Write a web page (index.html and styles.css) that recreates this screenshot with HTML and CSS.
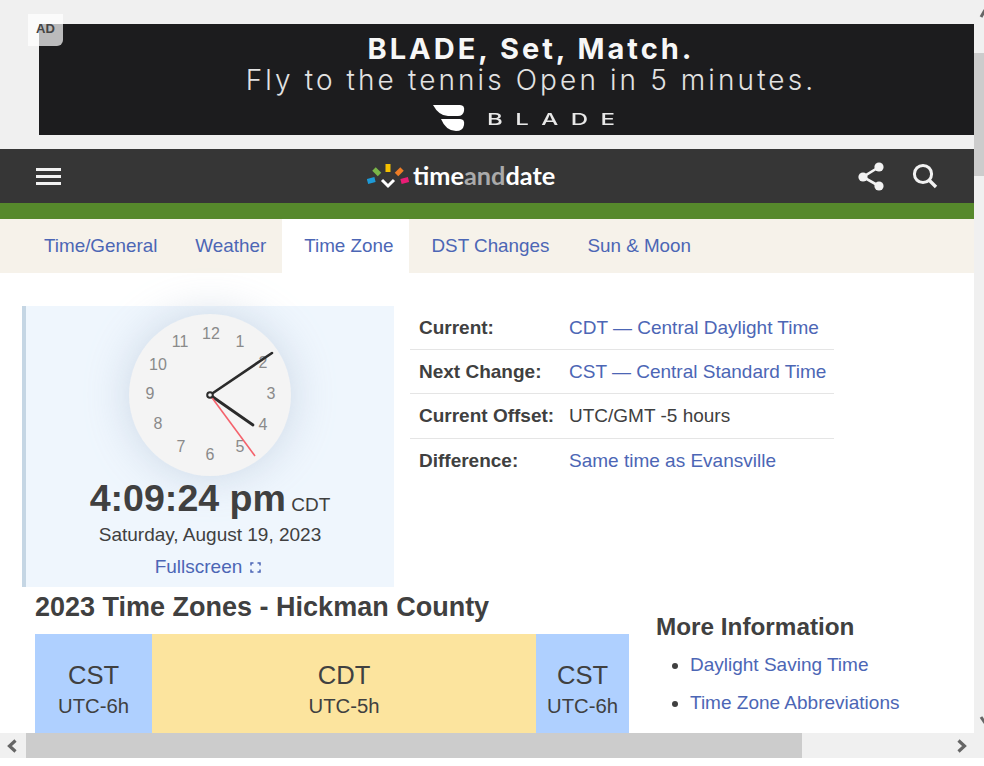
FILE: index.html
```html
<!DOCTYPE html>
<html>
<head>
    <meta charset="UTF-8">
    <meta name="viewport" content="width=device-width, initial-scale=1.0">
    <title>Hickman County Time Zone</title>
    <link rel="stylesheet" href="styles.css">
</head>
<body>
    <div class="window">
        <div class="page">
            <!-- ad -->
            <div class="ad-area">
                <span class="ad-badge">AD</span>
                <div class="ad-banner">
                    <p class="ad-title">BLADE, Set, Match.</p>
                    <p class="ad-sub">Fly to the tennis Open in 5 minutes.</p>
                    <div class="ad-brand">
                        <svg class="ad-logo" width="32" height="27" viewBox="0 0 32 27">
                            <path d="M0 0H27Q32 0 31 6Q30 11 25 11H15Q6 11 0 0Z" fill="#fff"/>
                            <path d="M8 14H27Q32 14 31 20Q30 26 23 26Q13 26 8 14Z" fill="#fff"/>
                        </svg>
                        <span class="ad-brand-name">BLADE</span>
                    </div>
                </div>
            </div>

            <!-- header -->
            <header>
                <div class="burger"><i></i><i></i><i></i></div>
                <div class="logo">
                    <svg width="43" height="27" viewBox="0 0 43 27">
                        <line x1="0.5" y1="18.5" x2="8" y2="16.5" stroke="#1e9ad6" stroke-width="5"/>
                        <line x1="7" y1="6" x2="12.5" y2="11.5" stroke="#7ab648" stroke-width="5"/>
                        <line x1="21" y1="1" x2="21" y2="9" stroke="#f5c000" stroke-width="5"/>
                        <line x1="35" y1="6" x2="29.5" y2="11.5" stroke="#ee7d26" stroke-width="5"/>
                        <line x1="41.5" y1="16.5" x2="34" y2="18.5" stroke="#ea1d76" stroke-width="5"/>
                        <path d="M15 17L21 23L27 17" fill="none" stroke="#fff" stroke-width="3"/>
                    </svg>
                    <span class="logo-text">time<span class="logo-and">and</span>date</span>
                </div>
                <div class="header-icons">
                    <svg width="28" height="30" viewBox="0 0 28 30">
                        <path d="M21 6L5 16L21 25" fill="none" stroke="#f2f2f2" stroke-width="2.6"/>
                        <circle cx="21" cy="6" r="4.6" fill="#f2f2f2"/>
                        <circle cx="5" cy="16" r="4.6" fill="#f2f2f2"/>
                        <circle cx="21" cy="25" r="4.6" fill="#f2f2f2"/>
                    </svg>
                    <svg width="26" height="26" viewBox="0 0 26 26">
                        <circle cx="11" cy="11" r="8.6" fill="none" stroke="#f2f2f2" stroke-width="3"/>
                        <line x1="17" y1="17" x2="24" y2="24" stroke="#f2f2f2" stroke-width="3.4"/>
                    </svg>
                </div>
            </header>
            <div class="green-bar"></div>

            <nav>
                <a href="#">Time/General</a>
                <a href="#">Weather</a>
                <a href="#" class="active">Time Zone</a>
                <a href="#">DST Changes</a>
                <a href="#">Sun &amp; Moon</a>
            </nav>

            <main>
                <div class="top-row">
                    <div class="clock-card">
                        <svg class="clock" width="240" height="190" viewBox="0 0 240 190">
                            <circle class="clock-face" cx="120" cy="90" r="81"/>
                            <g class="clock-nums">
                                <text x="121" y="34">12</text>
                                <text x="150" y="42">1</text>
                                <text x="173" y="63">2</text>
                                <text x="181" y="94">3</text>
                                <text x="173" y="125">4</text>
                                <text x="150" y="147">5</text>
                                <text x="120" y="155">6</text>
                                <text x="91" y="147">7</text>
                                <text x="68" y="124">8</text>
                                <text x="60" y="94">9</text>
                                <text x="68" y="65">10</text>
                                <text x="90" y="42">11</text>
                            </g>
                            <line x1="120" y1="90" x2="182" y2="48" stroke="#2b2b2b" stroke-width="2.6" stroke-linecap="round"/>
                            <line x1="120" y1="90" x2="163" y2="120" stroke="#2b2b2b" stroke-width="2.8" stroke-linecap="round"/>
                            <line x1="120" y1="90" x2="165" y2="151" stroke="#f4626c" stroke-width="1.6"/>
                            <circle cx="120" cy="90" r="2.8" fill="#f4f4f4" stroke="#2b2b2b" stroke-width="2"/>
                        </svg>
                        <div class="time"><b>4:09:24 pm</b> <span>CDT</span></div>
                        <div class="date">Saturday, August 19, 2023</div>
                        <div class="fullscreen">
                            <a href="#">Fullscreen</a>
                            <svg width="11" height="11" viewBox="0 0 11 11">
                                <path d="M1 3.5V1H3.5M7.5 1H10V3.5M10 7.5V10H7.5M3.5 10H1V7.5" fill="none" stroke="#4c66b5" stroke-width="1.5"/>
                            </svg>
                        </div>
                    </div>

                    <table class="info">
                        <tr><th>Current:</th><td><a href="#">CDT — Central Daylight Time</a></td></tr>
                        <tr><th>Next Change:</th><td><a href="#">CST — Central Standard Time</a></td></tr>
                        <tr><th>Current Offset:</th><td>UTC/GMT -5 hours</td></tr>
                        <tr><th>Difference:</th><td><a href="#">Same time as Evansville</a></td></tr>
                    </table>
                </div>

                <div class="bottom-row">
                    <section class="zones">
                        <h2>2023 Time Zones - Hickman County</h2>
                        <div class="zone-bar">
                            <div class="zone cst zone-first"><strong>CST</strong><span>UTC-6h</span></div>
                            <div class="zone cdt"><strong>CDT</strong><span>UTC-5h</span></div>
                            <div class="zone cst zone-last"><strong>CST</strong><span>UTC-6h</span></div>
                        </div>
                    </section>
                    <aside class="more">
                        <h3>More Information</h3>
                        <ul>
                            <li><a href="#">Daylight Saving Time</a></li>
                            <li><a href="#">Time Zone Abbreviations</a></li>
                        </ul>
                    </aside>
                </div>
            </main>
        </div>

        <!-- scrollbars -->
        <div class="vscroll">
            <svg class="v-up" width="10" height="10" viewBox="0 0 10 10"><path d="M7 8L11 1" fill="none" stroke="#666" stroke-width="3"/></svg>
            <div class="v-thumb"></div>
            <svg class="v-down" width="10" height="10" viewBox="0 0 10 10"><path d="M7 2L11 8" fill="none" stroke="#666" stroke-width="3"/></svg>
        </div>
        <div class="hscroll">
            <div class="h-arrow">
                <svg width="12" height="14" viewBox="0 0 12 14"><path d="M9.5 1.5L3.5 7L9.5 12.5" fill="none" stroke="#666" stroke-width="3.2"/></svg>
            </div>
            <div class="h-thumb"></div>
            <div class="h-arrow h-arrow-right">
                <svg width="12" height="14" viewBox="0 0 12 14"><path d="M2.5 1.5L8.5 7L2.5 12.5" fill="none" stroke="#666" stroke-width="3.2"/></svg>
            </div>
        </div>
    </div>
</body>
</html>
```

FILE: styles.css
```css
/* Global Styles */
* {
    margin: 0;
    padding: 0;
    box-sizing: border-box;
}

body {
    background: #fff;
    color: #404040;
    font-family: "Liberation Sans", Arial, sans-serif;
    font-size: 19px;
    overflow: hidden;
}

a {
    color: #4c66b5;
    text-decoration: none;
}

.window {
    width: 984px;
    height: 758px;
    display: grid;
    grid-template-columns: 974px 10px;
    grid-template-rows: 733px 25px;
    position: relative;
}

.page {
    overflow: hidden;
    background: #fff;
}

/* Ad */
.ad-area {
    height: 149px;
    background: #f0f0f0;
    padding: 24px 0 0 39px;
}

.ad-badge {
    position: absolute;
    left: 28px;
    top: 14px;
    width: 35px;
    height: 32px;
    padding: 7px 0 0 8px;
    background: rgba(255, 255, 255, 0.7);
    border-radius: 0 0 6px 0;
    color: #444;
    font-size: 13px;
    font-weight: bold;
    line-height: 16px;
    z-index: 2;
}

.ad-banner {
    width: 935px;
    height: 111px;
    background: #1c1c1e;
    overflow: hidden;
    text-align: center;
    font-family: Inter, "Liberation Sans", sans-serif;
    padding-top: 9px;
    padding-left: 49px;
}

.ad-title {
    color: #f7f7f7;
    font-size: 29px;
    font-weight: 700;
    letter-spacing: 3px;
    line-height: 32px;
}

.ad-sub {
    color: #e2e2e2;
    font-size: 28px;
    font-weight: 300;
    letter-spacing: 3.1px;
    line-height: 30px;
}

.ad-brand {
    display: flex;
    align-items: center;
    margin: 10px 0 0 345px;
    gap: 22px;
}

.ad-brand-name {
    color: #e8e8e8;
    font-size: 16px;
    font-weight: 500;
    letter-spacing: 8.3px;
    transform: scaleX(1.5);
    transform-origin: left center;
}

/* Header */
header {
    height: 54px;
    background: #363636;
    display: flex;
    align-items: center;
    padding: 0 36px;
}

.burger {
    width: 25px;
    display: flex;
    flex-direction: column;
    gap: 4px;
}

.burger i {
    display: block;
    height: 3px;
    background: #f2f2f2;
}

.logo {
    display: flex;
    align-items: center;
    gap: 3px;
    margin-left: 306px;
}

.logo-text {
    color: #fff;
    font-family: Lato, "Liberation Sans", sans-serif;
    font-size: 25.3px;
    font-weight: 700;
    line-height: 26px;
    margin-bottom: 2px;
}

.logo-and {
    color: #aaa;
}

.header-icons {
    margin-left: auto;
    display: flex;
    align-items: center;
    gap: 26px;
}

.green-bar {
    height: 16px;
    background: #56892c;
}

/* Tabs */
nav {
    height: 54px;
    background: #f6f2ea;
    display: flex;
    padding-left: 25px;
    font-size: 18.83px;
}

nav a {
    padding: 0 19px;
    line-height: 54px;
}

nav a.active {
    background: #fff;
    padding: 0 16px 0 22px;
    margin: 0 3px 0 -3px;
}

/* Main Content */
main {
    padding-top: 33px;
}

.top-row {
    display: flex;
    align-items: flex-start;
    padding-left: 22px;
}

.clock-card {
    width: 372px;
    height: 281px;
    background: #eff6fd;
    border-left: 4px solid #c5d6e4;
    display: flex;
    flex-direction: column;
    align-items: center;
}

.clock {
    display: block;
    margin: -1px 0 -5px 0;
    flex-shrink: 0;
    overflow: visible;
}

.clock-face {
    fill: #f4f4f4;
    filter: drop-shadow(0 0 22px rgba(150, 170, 195, 0.4));
}

.clock-nums text {
    fill: #8a8a8a;
    font-size: 16px;
    text-anchor: middle;
}

.time {
    line-height: 42px;
    margin-top: -13px;
}

.time b {
    font-size: 37.6px;
}

.date {
    line-height: 26px;
    margin-top: -4px;
}

.fullscreen {
    display: flex;
    align-items: center;
    gap: 8px;
    line-height: 26px;
    margin-top: 6px;
    padding-right: 4px;
}

.info {
    width: 424px;
    margin: -1px 0 0 16px;
    border-collapse: collapse;
}

.info th,
.info td {
    height: 44px;
    text-align: left;
    padding: 1px 0 0 9px;
    white-space: nowrap;
    border-bottom: 1px solid #e5e5e5;
}

.info th {
    width: 150px;
}

.info tr:first-child th,
.info tr:first-child td {
    padding-top: 2px;
}

.info tr:nth-child(3) th,
.info tr:nth-child(3) td {
    height: 45px;
}

.info tr:last-child th,
.info tr:last-child td {
    border-bottom: none;
}

.bottom-row {
    display: flex;
    padding-left: 35px;
}

.zones {
    width: 594px;
}

h2 {
    font-size: 27px;
    line-height: 40px;
}

.zone-bar {
    display: flex;
    height: 110px;
    margin-top: 7px;
    text-align: center;
}

.zone {
    padding-top: 23px;
    display: flex;
    flex-direction: column;
    font-size: 20.3px;
}

.zone strong {
    font-size: 25.6px;
    font-weight: normal;
    line-height: 36px;
}

.zone span {
    line-height: 24px;
    margin-top: 1px;
}

.cst {
    background: #afd0ff;
}

.cdt {
    background: #fce49e;
    width: 384px;
}

.zone-first {
    width: 117px;
}

.zone-last {
    width: 93px;
}

.more {
    margin-left: 27px;
    padding-top: 24px;
}

h3 {
    font-size: 24.3px;
    line-height: 32px;
}

.more ul {
    margin-top: 3px;
    padding-left: 34px;
}

.more li {
    line-height: 38px;
}

/* Scrollbars */
.vscroll {
    background: #f0f0f0;
    position: relative;
    overflow: hidden;
}

.v-up {
    display: block;
    position: absolute;
    left: 0;
    top: 9px;
}

.v-thumb {
    position: absolute;
    top: 53px;
    left: 0;
    width: 10px;
    height: 123px;
    background: #ccc;
}

.v-down {
    display: block;
    position: absolute;
    left: 0;
    top: 715px;
}

.hscroll {
    grid-column: 1 / 3;
    background: #f0f0f0;
    display: flex;
    align-items: center;
}

.h-arrow {
    width: 26px;
    padding-left: 6px;
    display: flex;
}

.h-arrow-right {
    width: 182px;
    padding-left: 154px;
}

.h-thumb {
    width: 776px;
    height: 25px;
    background: #ccc;
}
```
